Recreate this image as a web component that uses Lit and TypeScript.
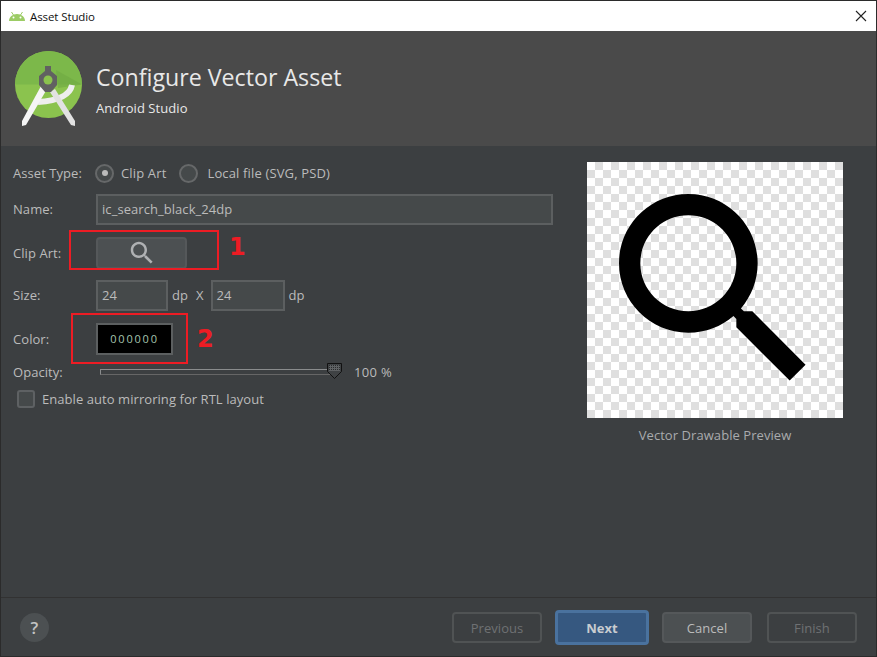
import { LitElement, html, css, svg } from 'lit';
import { customElement } from 'lit/decorators.js';

const SEARCH = 'M15.5 14h-.79l-.28-.27C15.41 12.59 16 11.11 16 9.5 16 5.91 13.09 3 9.5 3S3 5.91 3 9.5 5.91 16 9.5 16c1.61 0 3.09-.59 4.23-1.57l.27.28v.79l5 4.99L20.49 19l-4.99-5zm-6 0C7.01 14 5 11.99 5 9.5S7.01 5 9.5 5 14 7.01 14 9.5 11.99 14 9.5 14z';

const searchIcon = (size: number, fill: string) => html`
  <svg width=${size} height=${size} viewBox="0 0 24 24"><path d=${SEARCH} fill=${fill}></path></svg>`;

const logo = svg`
  <svg class="logo" width="90" height="100" viewBox="0 0 90 100">
    <circle cx="48.5" cy="44.5" r="33.5" fill="#8bc34e"></circle>
    <path d="M15 44.5a33.5 33.5 0 0 1 67 0z" fill="#7cb84a"></path>
    <path d="M56 30L82 44.5L58 48z" fill="#6fa843" opacity="0.6"></path>
    <path d="M72 45Q69 60 38 62" fill="none" stroke="#eeeeee" stroke-width="6"></path>
    <path d="M41 46L47 49L26 85L22 86L22 81z" fill="#f5f5f5"></path>
    <path d="M55 49L50 52L71 85L75 86L75 81z" fill="#e2e2e2"></path>
    <path d="M45 26h6v5l6 5v9l-6 7h-6l-6-7v-9l6-5z" fill="#616161"></path>
    <circle cx="48" cy="40" r="4.5" fill="#8bc34e"></circle>
  </svg>`;

const droid = svg`
  <svg class="droid" width="16" height="9" viewBox="0 0 16 9">
    <path d="M0 9C0 5 3.5 2 8 2s8 3 8 7z" fill="#9ccc65"></path>
    <path d="M2.500 0l2 3M13.500 0l-2 3" stroke="#9ccc65" stroke-width="1"></path>
    <circle cx="4.500" cy="5.500" r="1" fill="#fff"></circle>
    <circle cx="11.500" cy="5.500" r="1" fill="#fff"></circle>
  </svg>`;

@customElement('app-root')
export class AppRoot extends LitElement {
  static styles = css`
    :host {
      display: block;
      font-family: 'Open Sans', 'Noto Sans', sans-serif;
      font-size: 13px;
      letter-spacing: 0.06px;
      color: #bbbbbb;
    }

    .window {
      position: relative;
      box-sizing: border-box;
      width: 877px;
      height: 657px;
      border: 1px solid #2b2b2b;
      background: #3c3f41;
      display: flex;
      flex-direction: column;
    }

    .title {
      height: 30px;
      background: #fff;
      color: #111;
      display: flex;
      align-items: center;
      padding-left: 8px;
      gap: 5px;
      font-size: 11.5px;
      letter-spacing: -0.1px;
    }

    .close {
      margin-left: auto;
      margin-right: 9px;
      display: flex;
    }

    .banner {
      height: 115px;
      background: #4a4a4a;
      display: flex;
      align-items: center;
      position: relative;
    }

    .logo {
      flex: none;
      margin-top: 3px;
      margin-left: -1px;
    }

    .banner-text {
      margin-left: 6px;
      color: #e8e8e8;
      margin-top: 1px;
    }

    .heading {
      font-size: 23.2px;
      line-height: 30px;
      letter-spacing: 0;
    }

    .sub {
      line-height: 18px;
      margin-top: 7px;
    }

    .body {
      flex: 1;
      display: flex;
    }

    .form {
      box-sizing: border-box;
      width: 586px;
      padding: 15px 0 0 12px;
      display: grid;
      grid-template-columns: 83px 1fr;
      grid-template-rows: 24px 48px 39px 46px 41px 26px 28px;
      align-items: center;
      align-content: start;
    }

    .inline {
      display: flex;
      align-items: center;
    }

    .radio {
      box-sizing: border-box;
      width: 19px;
      height: 19px;
      border-radius: 50%;
      border: 2px solid #666869;
      background: #45494a;
      display: flex;
      align-items: center;
      justify-content: center;
      margin-left: -1px;
    }

    .radio i {
      width: 6px;
      height: 6px;
      border-radius: 50%;
      background: #bbbbbb;
    }

    .radio-label {
      margin-left: 7px;
      margin-right: 14px;
      letter-spacing: 0.15px;
    }

    .radio-label.wide {
      margin-left: 9px;
    }

    .field {
      box-sizing: border-box;
      height: 31px;
      border: 2px solid #5c5f60;
      background: #45494a;
      padding-left: 4px;
      display: flex;
      align-items: center;
    }

    .name {
      width: 457px;
    }

    .small {
      width: 72px;
    }

    .small.second {
      width: 74px;
    }

    .unit {
      margin-left: 4px;
    }

    .x {
      margin: 0 7px 0 8px;
    }

    .clip {
      box-sizing: border-box;
      width: 91px;
      height: 32px;
      border: 2px solid #55585a;
      border-radius: 4px;
      background: #4c5052;
      display: flex;
      align-items: center;
      justify-content: center;
    }

    .color {
      box-sizing: border-box;
      width: 77px;
      height: 32px;
      background: #000;
      border: 2px solid #5c5f60;
      color: #a5c4ae;
      font-size: 11px;
      letter-spacing: 1.8px;
      display: flex;
      align-items: center;
      justify-content: center;
    }

    .slider {
      position: relative;
      width: 235px;
      height: 6px;
      margin-left: 4px;
      border: 1px solid #8a8c8d;
      box-sizing: border-box;
      border-bottom-color: #666;
      background: #3c3f41;
    }

    .thumb {
      position: absolute;
      right: -8px;
      top: -7px;
    }

    .percent {
      margin-left: 19px;
      letter-spacing: 0.3px;
    }

    .check-row {
      grid-column: 1 / 3;
      display: flex;
      align-items: center;
      padding-left: 4px;
      gap: 7px;
    }

    .check {
      box-sizing: border-box;
      width: 18px;
      height: 18px;
      border: 2px solid #5e6163;
      border-radius: 3px;
      background: #45494a;
    }

    .preview {
      padding-top: 16px;
      display: flex;
      flex-direction: column;
      align-items: center;
      width: 256px;
    }

    .canvas {
      width: 256px;
      height: 256px;
      background: repeating-conic-gradient(#dfdfdf 0 25%, #fff 0 50%) 0 0 / 16px 16px;
    }

    .caption {
      margin-top: 9px;
      line-height: 17px;
      color: #a9abad;
    }

    .footer {
      height: 58px;
      border-top: 1px solid #323232;
      display: flex;
      align-items: center;
      padding: 0 19px;
    }

    .help {
      width: 29px;
      height: 29px;
      border-radius: 50%;
      background: #4c5052;
      color: #c4c4c4;
      font-size: 17px;
      font-weight: 600;
      display: flex;
      align-items: center;
      justify-content: center;
    }

    .buttons {
      margin-left: auto;
      display: flex;
      align-items: center;
    }

    .btn {
      box-sizing: border-box;
      width: 90px;
      height: 31px;
      padding-top: 1px;
      border: 2px solid #505354;
      border-radius: 4px;
      display: flex;
      align-items: center;
      justify-content: center;
      color: #6f7173;
    }

    .btn.next {
      width: 94px;
      height: 35px;
      margin: 0 13px;
      background: #365880;
      border: 3px solid #4a729e;
      color: #c8ccd0;
      font-weight: 700;
    }

    .btn.cancel {
      background: #4c5052;
      border-color: #55585a;
      color: #bbbbbb;
      margin-right: 15px;
    }

    .mark {
      position: absolute;
      box-sizing: border-box;
      border: 2px solid #ed1c24;
    }

    .mark.one {
      left: 68px;
      top: 229px;
      width: 150px;
      height: 40px;
    }

    .mark.two {
      left: 70px;
      top: 312px;
      width: 117px;
      height: 51px;
    }

    .num {
      position: absolute;
      color: #ed1c24;
      font-family: 'DejaVu Sans', sans-serif;
      font-weight: 700;
      font-size: 24px;
      line-height: 30px;
      letter-spacing: 0;
    }

    .num.one {
      left: 228px;
      top: 231px;
    }

    .num.two {
      left: 196px;
      top: 323px;
    }
  `;

  render() {
    return html`
      <div class="window">
        <div class="title">
          ${droid}
          <span>Asset Studio</span>
          <span class="close">
            <svg width="12" height="12" viewBox="0 0 12 12">
              <path d="M1 1l10 10M11 1L1 11" stroke="#222" stroke-width="1.1"></path>
            </svg>
          </span>
        </div>

        <div class="banner">
          ${logo}
          <div class="banner-text">
            <div class="heading">Configure Vector Asset</div>
            <div class="sub">Android Studio</div>
          </div>
        </div>

        <div class="body">
          <div class="form">
            <span>Asset Type:</span>
            <div class="inline">
              <span class="radio"><i></i></span>
              <span class="radio-label">Clip Art</span>
              <span class="radio"></span>
              <span class="radio-label wide">Local file (SVG, PSD)</span>
            </div>

            <span>Name:</span>
            <div class="field name">ic_search_black_24dp</div>

            <span>Clip Art:</span>
            <div class="clip">${searchIcon(30, '#afb1b3')}</div>

            <span>Size:</span>
            <div class="inline">
              <div class="field small">24</div>
              <span class="unit">dp</span>
              <span class="x">X</span>
              <div class="field small second">24</div>
              <span class="unit">dp</span>
            </div>

            <span>Color:</span>
            <div class="color">000000</div>

            <span>Opacity:</span>
            <div class="inline">
              <div class="slider">
                <svg class="thumb" width="15" height="16" viewBox="0 0 15 16">
                  <defs>
                    <pattern id="dots" width="2" height="2" patternUnits="userSpaceOnUse">
                      <rect width="2" height="2" fill="#5f6264"></rect>
                      <rect width="1" height="1" fill="#2a2c2d"></rect>
                    </pattern>
                  </defs>
                  <path d="M.5.5h14v8l-7 7-7-7z" fill="#3f4244" stroke="#111"></path>
                  <path d="M2 2h11v6H2z" fill="url(#dots)"></path>
                </svg>
              </div>
              <span class="percent">100 %</span>
            </div>

            <div class="check-row">
              <span class="check"></span>
              <span>Enable auto mirroring for RTL layout</span>
            </div>
          </div>

          <div class="preview">
            <div class="canvas">${searchIcon(256, '#000')}</div>
            <div class="caption">Vector Drawable Preview</div>
          </div>
        </div>

        <div class="footer">
          <div class="help">?</div>
          <div class="buttons">
            <div class="btn">Previous</div>
            <div class="btn next">Next</div>
            <div class="btn cancel">Cancel</div>
            <div class="btn">Finish</div>
          </div>
        </div>

        <div class="mark one"></div>
        <div class="num one">1</div>
        <div class="mark two"></div>
        <div class="num two">2</div>
      </div>
    `;
  }
}
